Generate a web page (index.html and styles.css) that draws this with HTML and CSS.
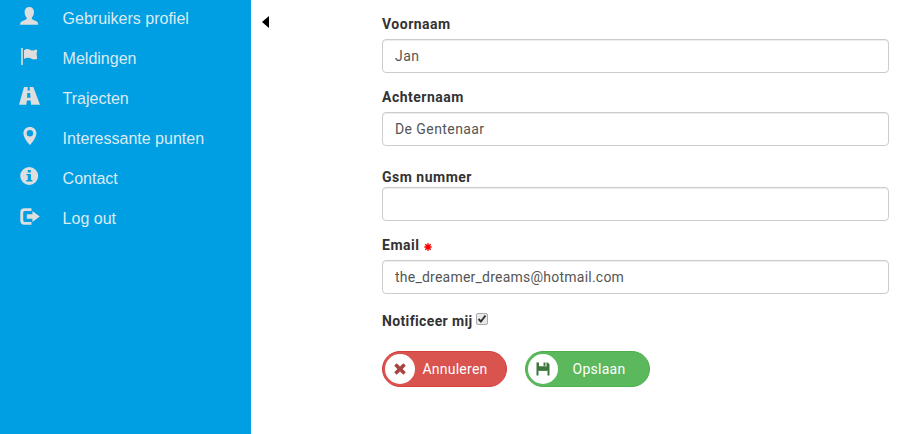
FILE: index.html
```html
<!DOCTYPE html>
<html lang="nl">
<head>
<meta charset="utf-8">
<title>Gebruikers profiel</title>
<link rel="stylesheet" href="styles.css">
</head>
<body>
<div class="layout">
  <nav class="sidebar">
    <a class="item"><svg class="icon" viewBox="0 0 24 24"><path d="M11.300 3C14.300 3 16 5 16 8c0 2.200-.8 4-1.900 5.200-.6.8-.4 1.800.4 2.300L18.800 17.600Q20.300 18.400 20.300 20.800H2Q2 18.400 3.500 17.600L8 15.500c.8-.5 1-1.500.4-2.300C7.300 12 6.600 10.200 6.600 8c0-3 1.700-5 4.700-5Z"/></svg><span>Gebruikers profiel</span></a>
    <a class="item"><svg class="icon" viewBox="0 0 24 24"><path d="M3.200 4h1.600v17H3.200ZM6 6.200C9 4 11 5.200 13 6.200c1.500.7 3 .3 4.500-.5H19.200L18.600 10 19.200 14.700C17 16 15 15.500 13 14.400c-2-1-4.500-1.100-7 .6Z"/></svg><span>Meldingen</span></a>
    <a class="item"><svg class="icon" viewBox="0 0 24 24"><path fill-rule="evenodd" d="M6 3h3.800l-.3 3.400h2.400L11.600 3h3.700L22 20.800H13.100L12.600 16.500H8.900L8.300 20.800H1ZM9.300 9 9 13.800h3.500L12.100 9Z"/></svg><span>Trajecten</span></a>
    <a class="item"><svg class="icon" viewBox="0 0 24 24"><path fill-rule="evenodd" d="M11.900 3c3.800 0 6.500 2.700 6.500 6.300C18.400 13 14.500 18.500 11.900 21 9.300 18.500 5.400 13 5.400 9.300 5.400 5.700 8.100 3 11.900 3Zm0 3.100a3.200 3.200 0 1 0 0 6.400 3.200 3.200 0 0 0 0-6.400Z"/></svg><span>Interessante punten</span></a>
    <a class="item"><svg class="icon" viewBox="0 0 24 24"><path fill-rule="evenodd" d="M11.200 3a9 9 0 1 1 0 18 9 9 0 0 1 0-18ZM9.800 5.900v2.600h3V5.900ZM8.400 9.900v1.400h1.400v4.600H8.200v1.500h6.200v-1.500h-1.500v-6Z"/></svg><span>Contact</span></a>
    <a class="item"><svg class="icon" viewBox="0 0 24 24"><path d="M13.500 4.200H6.500Q2.300 4.200 2.300 8.400v8.200q0 4.200 4.200 4.200h7V18H7Q5.200 18 5.200 16.200V8.800Q5.200 7 7 7h6.500ZM14.400 7l7.400 5.500-7.400 5.600v-3.400H8.800v-4.400h5.600Z"/></svg><span>Log out</span></a>
  </nav>
  <div class="gutter"><svg class="collapse" viewBox="0 0 7 12"><path d="M7 0v12L0 6Z"/></svg></div>
  <form class="profile">
    <div class="field"><label for="first">Voornaam</label><input id="first" class="control" type="text" value="Jan"></div>
    <div class="field"><label for="last">Achternaam</label><input id="last" class="control" type="text" value="De Gentenaar"></div>
    <div class="field compact"><label for="gsm">Gsm nummer</label><input id="gsm" class="control" type="text"></div>
    <div class="field"><label for="mail">Email <svg class="required" viewBox="0 0 8 8"><path d="M4 .3v7.400M.3 4h7.400M1.300 1.300l5.400 5.400M6.700 1.300 1.300 6.700"/></svg></label><input id="mail" class="control mail" type="text" value="the_dreamer_dreams@hotmail.com"></div>
    <div class="notify"><span>Notificeer mij</span><span class="check"><svg viewBox="0 0 12 12"><path d="M2.500 6 4.900 8.500 9.500 2.500"/></svg></span></div>
    <div class="actions">
      <button type="button" class="btn cancel"><span class="disc"><svg viewBox="0 0 14 14"><path d="M3.700 1.200 7 4.400l3.300-3.200 2.500 2.500L9.600 7l3.200 3.300-2.500 2.500L7 9.600l-3.300 3.200-2.500-2.500L4.400 7 1.200 3.700Z"/></svg></span><span class="caption">Annuleren</span></button>
      <button type="button" class="btn save"><span class="disc"><svg viewBox="0 0 14 14"><path fill-rule="evenodd" d="M.5.500H3v4.500h7.500V.500h1.300l1.700 1.700v11.300H11.500V8.500H2.500v5H.5ZM3 4.500h8v4.500H3ZM7.500.500h2v3.200h-2Z" clip-rule="evenodd"/><path d="M2.500 4.500h9v4.200h-9Z"/></svg></span><span class="caption">Opslaan</span></button>
    </div>
  </form>
</div>
</body>
</html>
```
FILE: styles.css
```css
* { box-sizing: border-box; }
body { margin: 0; background: #fff; overflow: hidden; font: 14px/20px Roboto, sans-serif; color: #333; }
.layout { display: flex; height: 434px; }
.sidebar { width: 251px; flex: none; background: #009fe3; overflow: hidden; }
.item { display: flex; align-items: center; height: 40px; padding-left: 18px; gap: 20.6px; font: 16px/20px "Liberation Sans", Arial, sans-serif; color: #dcebf3; }
.item:first-child { margin-top: -2px; }
.item span { padding-top: 2px; }
.icon { width: 24px; height: 24px; margin-top: -4px; fill: #dedede; }
.gutter { width: 131px; flex: none; padding: 16px 0 0 11px; }
.collapse { display: block; width: 7px; height: 12px; }
.profile { width: 507px; padding-top: 14px; }
.field { margin-bottom: 14px; }
.field label { display: block; height: 20px; margin-bottom: 5px; font-weight: 700; letter-spacing: .5px; }
.field.compact { padding-top: 7px; }
.field.compact label { margin-bottom: 0; }
.control { display: block; width: 100%; height: 34px; padding: 6px 12px; border: 1px solid #ccc; border-radius: 4px; box-shadow: inset 0 1px 1px rgba(0,0,0,.075); font: 14px/20px Roboto, sans-serif; letter-spacing: .42px; color: #555; background: #fff; }
.control.mail { letter-spacing: .23px; }
.required { width: 8px; height: 8px; margin-left: 1px; vertical-align: -1px; stroke: #f00; stroke-width: 1.5; }
.notify { display: flex; gap: 4px; margin-top: 17px; font-weight: 700; letter-spacing: .36px; }
.check { width: 12px; height: 12px; margin-top: 2px; border: 1px solid #aaa; border-radius: 2px; background: #e9e9e9; }
.check svg { display: block; width: 12px; height: 12px; margin: -1px; fill: none; stroke: #333; stroke-width: 2; }
.actions { display: flex; gap: 18px; margin-top: 20px; }
.btn { display: flex; align-items: center; width: 125px; height: 36px; padding: 0 0 0 2px; border: 1px solid; border-radius: 18px; font: 14px/20px Roboto, sans-serif; letter-spacing: .25px; color: #fff; }
.cancel { background: #d9534f; border-color: #d43f3a; }
.save { background: #5cb85c; border-color: #4cae4c; }
.disc { display: flex; align-items: center; justify-content: center; width: 30px; height: 30px; border-radius: 50%; background: #fff; }
.disc svg { width: 14px; height: 14px; }
.cancel .disc svg { fill: #a94442; }
.save .disc svg { margin-top: -1px; fill: #3c763d; }
.caption { flex: 1; text-align: center; }
.cancel .caption { padding-right: 11px; }
.save .caption { padding-right: 9px; }
```
